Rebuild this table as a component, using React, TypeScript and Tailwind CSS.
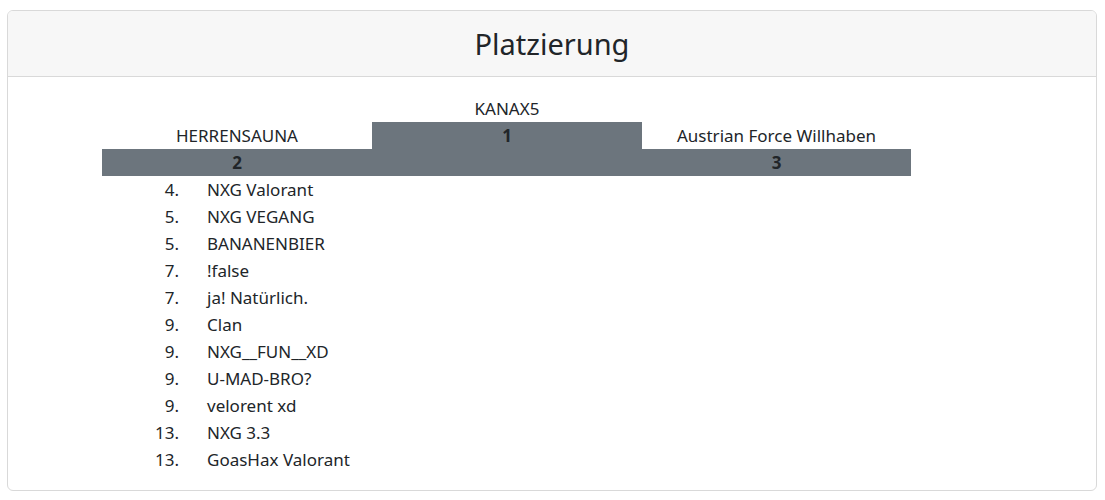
import React from "react";

const list: [string, string][] = [
  ["4.", "NXG Valorant"],
  ["5.", "NXG VEGANG"],
  ["5.", "BANANENBIER"],
  ["7.", "!false"],
  ["7.", "ja! Natürlich."],
  ["9.", "Clan"],
  ["9.", "NXG__FUN__XD"],
  ["9.", "U-MAD-BRO?"],
  ["9.", "velorent xd"],
  ["13.", "NXG 3.3"],
  ["13.", "GoasHax Valorant"],
];

export default function App() {
  return (
    <div
      className="bg-white text-[#212529] text-[17px] min-h-[500px] pt-[10px] pl-[7px] pr-[8px]"
      style={{ fontFamily: '"Segoe UI", "Noto Sans", "Open Sans", sans-serif' }}
    >
      <div className="border border-[#d9d9d9] rounded-[6px] overflow-hidden">
        <div className="bg-[#f7f7f7] border-b border-[#d9d9d9] h-[66px] flex items-center justify-center">
          <h1 className="text-[29px] leading-none">Platzierung</h1>
        </div>
        <div className="pt-[18px] pb-[17px] pl-[94px]">
          <div className="grid grid-cols-[270px_270px_269px] items-end w-[809px]">
            <div className="flex flex-col">
              <div className="h-[27px] flex items-center justify-center">HERRENSAUNA</div>
              <div className="h-[27px] bg-[#6c757d] flex items-center justify-center font-bold">2</div>
            </div>
            <div className="flex flex-col">
              <div className="h-[27px] flex items-center justify-center">KANAX5</div>
              <div className="h-[54px] bg-[#6c757d] flex justify-center font-bold">
                <div className="h-[27px] flex items-center">1</div>
              </div>
            </div>
            <div className="flex flex-col">
              <div className="h-[27px] flex items-center justify-center">Austrian Force Willhaben</div>
              <div className="h-[27px] bg-[#6c757d] flex items-center justify-center font-bold">3</div>
            </div>
          </div>
          <div className="flex flex-col">
            {list.map(([n, name], i) => (
              <div key={i} className="h-[27px] flex items-center">
                <span className="w-[77px] text-right">{n}</span>
                <span className="ml-[28px]">{name}</span>
              </div>
            ))}
          </div>
        </div>
      </div>
    </div>
  );
}
